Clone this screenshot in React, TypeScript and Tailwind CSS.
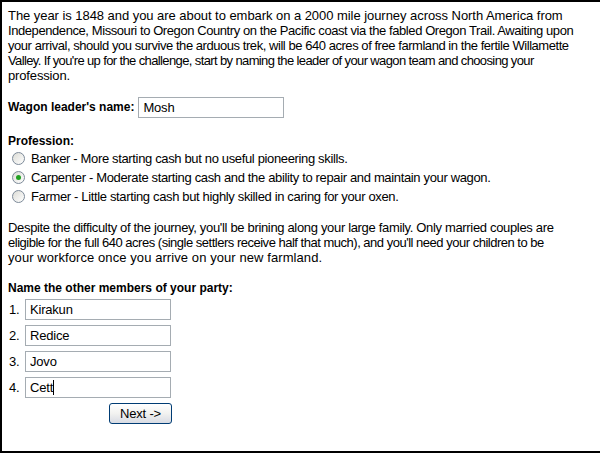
import React from 'react';

// ---------------------------------------------------------------------------------
type TRadioProps = {
  readonly checked: boolean;
  readonly label: string;
  readonly onSelect: () => void;
};

function Radio({ checked, label, onSelect }: TRadioProps) {
  return (
    <div className="flex items-center h-[19px] cursor-default" onClick={onSelect}>
      <span className="ml-[4px] w-[13px] h-[13px] rounded-full border border-[#7d8a99] bg-gradient-to-br from-[#dcdcd6] to-white flex items-center justify-center">
        {checked && <span className="w-[5px] h-[5px] rounded-full bg-[#21a121]" />}
      </span>
      <span className="ml-[6px] tracking-[-0.35px]">{label}</span>
    </div>
  );
}

// one line of copy, kept on its own row like the original wrap
function Line({ children, className = '' }: { children: React.ReactNode; className?: string }) {
  return <span className={`block whitespace-nowrap ${className}`}>{children}</span>;
}

const inputCls =
  'h-[21px] w-[146px] border border-[#a5acb2] px-[4px] text-[13px] leading-[15px] tracking-[-0.2px] text-black bg-white outline-none font-["Liberation_Sans",Arial,sans-serif]';

// ---------------------------------------------------------------------------------
export default function App() {
  const [leader, setLeader] = React.useState('Mosh');
  const [profession, setProfession] = React.useState(1);
  const [members, setMembers] = React.useState(['Kirakun', 'Redice', 'Jovo', 'Cett']);

  const professions = [
    'Banker - More starting cash but no useful pioneering skills.',
    'Carpenter - Moderate starting cash and the ability to repair and maintain your wagon.',
    'Farmer - Little starting cash but highly skilled in caring for your oxen.',
  ];

  return (
    <div className="h-[453px] w-[600px] bg-white border-t-2 border-l-2 border-b-2 border-black pt-[6px] pl-[6px] pr-[4px] text-[13px] leading-[15px] tracking-[-0.15px] text-black font-['Liberation_Sans',Arial,sans-serif] overflow-hidden">
      <p>
        <Line className="tracking-[-0.05px]">
          The year is 1848 and you are about to embark on a 2000 mile journey across North America from
        </Line>
        <Line className="tracking-[-0.42px]">
          Independence, Missouri to Oregon Country on the Pacific coast via the fabled Oregon Trail. Awaiting upon
        </Line>
        <Line className="tracking-[-0.45px]">
          your arrival, should you survive the arduous trek, will be 640 acres of free farmland in the fertile Willamette
        </Line>
        <Line className="tracking-[-0.62px]">
          Valley. If you're up for the challenge, start by naming the leader of your wagon team and choosing your
        </Line>
        <Line>profession.</Line>
      </p>

      <div className="flex items-center mt-[14px]">
        <span className="font-bold text-[12px] tracking-normal">Wagon leader's name:</span>
        <input
          className={`${inputCls} ml-[4px]`}
          value={leader}
          onChange={(e: React.ChangeEvent<HTMLInputElement>) => setLeader(e.target.value)}
        />
      </div>

      <p className="font-bold text-[12px] tracking-normal mt-[16px]">Profession:</p>
      <div>
        {professions.map((p, i) => (
          <Radio key={i} checked={profession == i} label={p} onSelect={() => setProfession(i)} />
        ))}
      </div>

      <p className="mt-[14px]">
        <Line className="tracking-[-0.33px]">
          Despite the difficulty of the journey, you'll be brining along your large family. Only married couples are
        </Line>
        <Line className="tracking-[-0.49px]">
          eligible for the full 640 acres (single settlers receive half that much), and you'll need your children to be
        </Line>
        <Line className="tracking-[0.08px]">your workforce once you arrive on your new farmland.</Line>
      </p>

      <p className="font-bold text-[12px] tracking-normal mt-[16px]">Name the other members of your party:</p>

      <div className="flex flex-col items-end w-[164px] mt-[3px] gap-[5px]">
        {members.map((m, i) => (
          <div key={i} className="flex items-center w-full">
            <span className="w-[17px] pl-[1px]">{i + 1}.</span>
            <div className="relative">
              <input
                className={inputCls}
                value={m}
                onChange={(e: React.ChangeEvent<HTMLInputElement>) => {
                  const next = [...members];
                  next[i] = e.target.value;
                  setMembers(next);
                }}
              />
              {i == members.length - 1 && m == 'Cett' && (
                <span className="absolute left-[28px] top-[3px] w-px h-[15px] bg-black pointer-events-none" />
              )}
            </div>
          </div>
        ))}
        <button className="h-[21px] w-[63px] rounded-[3px] border border-[#003c74] bg-gradient-to-b from-white via-[#f2f2f0] to-[#d8dbe3] text-[13px] leading-[15px] tracking-[-0.2px] text-black">
          Next -&gt;
        </button>
      </div>
    </div>
  );
}
